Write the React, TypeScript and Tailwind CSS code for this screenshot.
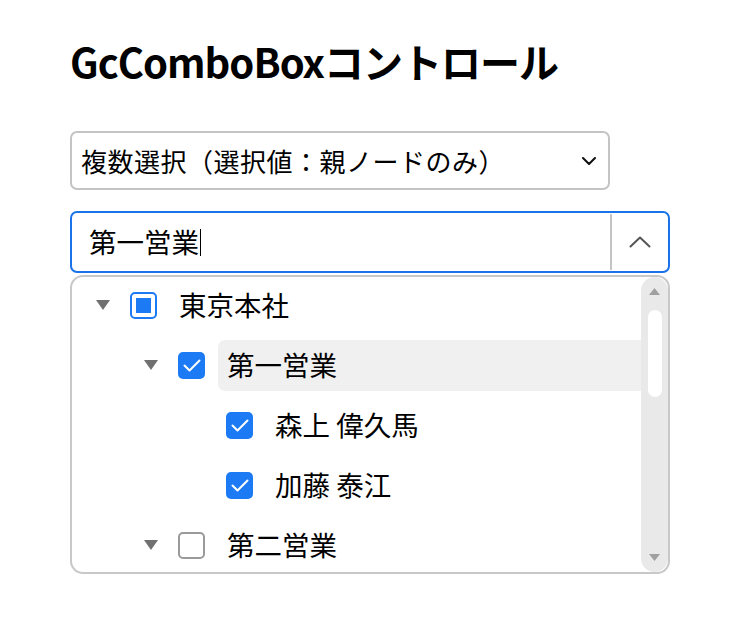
import React from "react";

const FONT = { fontFamily: '"Noto Sans CJK JP", "Noto Sans", sans-serif' };

function Tri({ hidden }: { hidden?: boolean }) {
  return (
    <svg width="14" height="10" viewBox="0 0 14 10" className={hidden ? "invisible shrink-0" : "shrink-0"}>
      <path d="M0 0 H14 L7 10 Z" fill="#707070" />
    </svg>
  );
}

function Box({ state }: { state: "checked" | "indeterminate" | "unchecked" }) {
  if (state === "checked") {
    return (
      <div className="w-[27px] h-[27px] shrink-0 rounded-[5px] bg-[#1b7af4] flex items-center justify-center">
        <svg width="18" height="13" viewBox="0 0 18 13">
          <path d="M1.5 6.5 L6.5 11.5 L16.5 1.5" fill="none" stroke="white" strokeWidth="2" strokeLinecap="round" strokeLinejoin="round" />
        </svg>
      </div>
    );
  }
  if (state === "indeterminate") {
    return (
      <div className="w-[27px] h-[27px] shrink-0 rounded-[5px] border-2 border-[#1b7af4] bg-white flex items-center justify-center">
        <div className="w-[15px] h-[15px] bg-[#1b7af4]" />
      </div>
    );
  }
  return <div className="w-[27px] h-[27px] shrink-0 rounded-[5px] border-2 border-[#9a9a9a] bg-white" />;
}

type Row = { label: string; level: number; leaf?: boolean; state: "checked" | "indeterminate" | "unchecked"; active?: boolean };

const rows: Row[] = [
  { label: "東京本社", level: 0, state: "indeterminate" },
  { label: "第一営業", level: 1, state: "checked", active: true },
  { label: "森上 偉久馬", level: 2, leaf: true, state: "checked" },
  { label: "加藤 泰江", level: 2, leaf: true, state: "checked" },
  { label: "第二営業", level: 1, state: "unchecked" },
];

const indent = ["pl-[24px]", "pl-[72px]", "pl-[120px]"];

export default function App() {
  return (
    <div className="w-[750px] h-[618px] bg-white text-black pl-[70px] pt-[32px]" style={FONT}>
      <h1 className="text-[40px] font-bold leading-[58px] tracking-[-1px]">GcComboBoxコントロール</h1>

      <div className="mt-[41px] w-[540px] h-[59px] border-2 border-[#c4c4c4] rounded-[7px] flex items-center pl-[9px] pr-[12px]">
        <span className="flex-1 text-[26px] leading-none tracking-[0.5px]">複数選択（選択値：親ノードのみ）</span>
        <svg width="14" height="8" viewBox="0 0 14 8">
          <path d="M1 1 L7 7 L13 1" fill="none" stroke="#111" strokeWidth="2" strokeLinecap="round" strokeLinejoin="round" />
        </svg>
      </div>

      <div className="mt-[21px] w-[600px] h-[62px] border-2 border-[#1a73e8] rounded-[7px] flex items-stretch">
        <div className="flex-1 flex items-center pl-[17px]">
          <span className="text-[27.5px] leading-none">第一営業</span>
          <span className="w-px h-[27px] bg-black ml-px" />
        </div>
        <div className="w-[2px] bg-[#c4c4c4] my-px" />
        <div className="w-[56px] flex items-center justify-center">
          <svg width="22" height="12" viewBox="0 0 22 12">
            <path d="M1.5 10.5 L11 1.5 L20.5 10.5" fill="none" stroke="#555" strokeWidth="2" strokeLinecap="round" strokeLinejoin="round" />
          </svg>
        </div>
      </div>

      <div className="mt-[2px] w-[600px] h-[299px] border-2 border-[#c8c8c8] rounded-[13px] flex overflow-hidden">
        <div className="flex-1 -mt-[2px] flex flex-col">
          {rows.map((r) => (
            <div key={r.label} className={`h-[60px] shrink-0 flex items-center ${indent[r.level]}`}>
              <Tri hidden={r.leaf} />
              <div className="ml-[20px]">
                <Box state={r.state} />
              </div>
              <div
                className={`ml-[13px] flex-1 h-[51px] flex items-center pl-[9px] rounded-l-[7px] ${r.active ? "bg-[#f0f0f0]" : ""}`}
              >
                <span className="text-[27.5px] leading-none">{r.label}</span>
              </div>
            </div>
          ))}
        </div>
        <div className="w-[27px] bg-[#e9e9e9] rounded-full flex flex-col items-center py-[11px]">
          <svg width="11" height="7" viewBox="0 0 11 7">
            <path d="M0 7 L5.5 0 L11 7 Z" fill="#a0a0a0" />
          </svg>
          <div className="mt-[15px] w-[14px] h-[87px] bg-white rounded-full" />
          <div className="flex-1" />
          <svg width="11" height="7" viewBox="0 0 11 7">
            <path d="M0 0 H11 L5.5 7 Z" fill="#a0a0a0" />
          </svg>
        </div>
      </div>
    </div>
  );
}
